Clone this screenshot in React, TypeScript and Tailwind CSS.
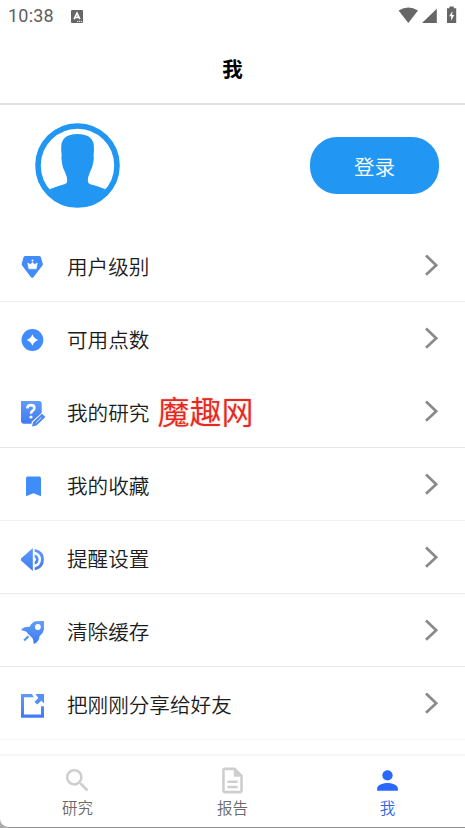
import type { ReactNode } from "react";
import clsx from "clsx";

interface MenuItem {
  label: string;
  icon: ReactNode;
  border: string;
}

const menuItems: MenuItem[] = [
  {
    label: "用户级别",
    border: "border-[#efefef]",
    icon: (
      <>
        <path d="M6.5 5h14q1 0 1.6 1l2 6.7q.3 1-.4 1.8l-9 11.7q-1.2 1.3-2.4 0l-8.9-11.7q-.7-.9-.4-1.8L4.9 6q.5-1 1.6-1Z" transform="translate(-.3 0)" fill="#418cfb" />
        <path d="M8.8 12l2.7 1.6 2-2.4 2 2.4 2.7-1.6-.9 5.8H9.8Z" fill="#fff" stroke="#fff" strokeWidth=".6" />
        <circle cx="13.5" cy="9.6" r="1" fill="#fff" />
      </>
    ),
  },
  {
    label: "可用点数",
    border: "border-transparent",
    icon: (
      <>
        <circle cx="13.4" cy="16" r="10.9" fill="#418cfb" />
        <path d="M13.4 10.2q1.5 4.2 5.7 5.8-4.2 1.6-5.7 5.8-1.5-4.2-5.7-5.8 4.2-1.6 5.7-5.8Z" fill="#fff" />
      </>
    ),
  },
  {
    label: "我的研究",
    border: "border-[#e6e6e6]",
    icon: (
      <>
        <path d="M2 4h18q2.7 0 2.7 2.7V17L13.3 26.8H5q-3 0-3-3Z" fill="url(#blue)" />
        <path d="M8.3 11.4q.1-3.3 3.7-3.3 3.4 0 3.4 2.9 0 1.6-1.6 2.6-1.8 1.1-1.8 3.1" fill="none" stroke="#fff" strokeWidth="2.6" />
        <circle cx="12" cy="20" r="1.6" fill="#fff" />
        <path d="M23.2 15.6l4 3.6-9.4 9.8-6.4 1.2 1.6-5.6Z" fill="#fff" />
        <path d="M23 16.8l3.4 3.1-8.9 8.5-4.6 1.2 1.2-4.5Z" fill="#4f87f4" />
        <path d="M17.1 25.7l5.2-5.2" stroke="#fff" strokeWidth=".8" />
      </>
    ),
  },
  {
    label: "我的收藏",
    border: "border-[#f0f0f0]",
    icon: <path d="M7 8.2q0-1.7 1.7-1.7h11.6q1.7 0 1.7 1.7v18.1l-7.5-3-7.5 3Z" fill="#418cfb" />,
  },
  {
    label: "提醒设置",
    border: "border-[#ebebeb]",
    icon: (
      <>
        <path d="M13.8 5v23L2 17.5v-2Z" fill="url(#blue)" />
        <path d="M15.7 11.5q3.9 1 3.9 5t-3.9 5v-3q1.3-.6 1.3-2t-1.3-2Z" fill="url(#blue)" />
        <path d="M15.7 5.9q9.2 1.7 9.2 10.6t-9.2 10.7v-2.8q6.3-1.8 6.3-7.9t-6.3-7.8Z" fill="url(#blue)" />
      </>
    ),
  },
  {
    label: "清除缓存",
    border: "border-[#e6e6e6]",
    icon: (
      <>
        <path d="M25 5l-8.3.3q-3.3.5-6.2 5.6-5.3-.6-8.5 3.2l4.2 1.2q1.7.6 2.5 2.2l3.6 3.5q1.5 1 1.8 2.8l.7 4.3q5.6-2.7 5.7-7.9 3.9-3 4.4-6.5Z" fill="url(#blue)" />
        <circle cx="18.9" cy="11" r="2.9" fill="#fff" />
        <path d="M9.4 20.2l-4.2 4.3" stroke="#4f8ff8" strokeWidth="2.1" />
      </>
    ),
  },
  {
    label: "把刚刚分享给好友",
    border: "border-[#f5f5f5]",
    icon: (
      <>
        <path d="M13 5H2v23.7h23V17.2h-3v8.3H5V8.2h9.7Z" fill="url(#blue)" />
        <path d="M16.4 5H25v9.3l-2.8-2.5-3.9 3.8-2.8-2.8 3.9-3.8Z" fill="#5590f5" />
      </>
    ),
  },
];

const tabs = [
  {
    label: "研究",
    path: "M15.5 14h-.79l-.28-.27A6.47 6.47 0 0 0 16 9.5 6.5 6.5 0 1 0 9.5 16c1.61 0 3.09-.59 4.23-1.57l.27.28v.79l5 4.99L20.49 19l-4.99-5zm-6 0C7.01 14 5 11.99 5 9.5S7.01 5 9.5 5 14 7.01 14 9.5 11.99 14 9.5 14z",
  },
  {
    label: "报告",
    path: "M8 16h8v2H8zm0-4h8v2H8zm6-10H6c-1.1 0-2 .9-2 2v16c0 1.1.89 2 1.99 2H18c1.1 0 2-.9 2-2V8l-6-6zm4 18H6V4h7v5h5v11z",
  },
  {
    label: "我",
    path: "M12 12c2.21 0 4-1.79 4-4s-1.79-4-4-4-4 1.79-4 4 1.79 4 4 4zm0 2c-2.67 0-8 1.34-8 4v2h16v-2c0-2.66-5.33-4-8-4z",
    active: true,
  },
];

function StatusBar() {
  return (
    <div className="flex h-8 items-center pl-2 pr-2 font-['Roboto',sans-serif] text-[#5e5e5e]">
      <span className="w-[63px] text-[18px] leading-8 tracking-[0.2px]">10:38</span>
      <svg className="h-[13px] w-3" viewBox="0 0 12 13">
        <rect width="12" height="13" rx="1" fill="#666" />
        <path d="M3.1 9.1L6 3l2.9 6.1M4.1 7.4h3.8" fill="none" stroke="#fff" strokeWidth="1.6" />
        <path d="M6 11.4h5" stroke="#fff" strokeWidth="1" strokeDasharray="1.2 .8" />
      </svg>
      <svg className="mb-[2px] ml-auto h-[18px] w-[59px]" viewBox="0 0 59 18" fill="#666">
        <path d="M.6 4.6Q10.3-1.6 20 4.6L10.3 17Z" />
        <path d="M38.8 2.7V17H24Z" />
        <path d="M51.4 .4h4.4v1.8h2.4V17h-9.2V2.2h2.4Z" />
        <path d="M54.5 4.9l-3.3 5.3h2v4.6l3-5.9h-2Z" fill="#fff" />
      </svg>
    </div>
  );
}

function Profile() {
  return (
    <section className="flex h-[124px] items-center justify-between pt-[2px] pr-[26px] pb-[5px] pl-[35px]">
      <svg className="size-[85px]" viewBox="0 0 85 85">
        <circle cx="42.5" cy="42.5" r="39.5" fill="#fff" stroke="#2196f3" strokeWidth="5.6" />
        <path d="M14.5 66.3q7.5-3.2 14.8-5.1 3-.7 2.9-3.2 0-4.5-2.2-8.8-2.8-4.4-3.2-10.7-1-3.4-.1-5.8-.9-5.7-.3-11.5Q28.5 11 42.5 11t16.2 10.2q.7 5.8-.2 11.5.9 2.4-.1 5.8-.8 6.3-3.5 10.7-2 4.3-2.1 8.8 0 2.5 2.5 3.2 8.2 1.9 15.2 5.1-10.5 15.9-28 15.9t-28-15.9Z" fill="#2196f3" />
      </svg>
      <button className="h-[57px] w-[129px] rounded-[27px] bg-[#2196f3] pt-[2px] text-[20.5px] font-[350] text-white">登录</button>
    </section>
  );
}

function MenuRow({ label, icon, border }: MenuItem) {
  return (
    <li className={clsx("flex h-[73px] items-center border-b pr-[26px] pl-[19px]", border)}>
      <svg className="size-7 overflow-visible" viewBox="0 0 28 28">
        {icon}
      </svg>
      <span className="ml-5 pt-[2px] text-[20.6px] leading-8 font-[350] text-[#1c1c1c]">{label}</span>
      <svg className="ml-auto h-[22px] w-[15px]" viewBox="0 0 15 22">
        <path d="M2 1.5l10.2 9.7L2 20.7" fill="none" stroke="#8a8a8a" strokeWidth="2.7" />
      </svg>
    </li>
  );
}

function TabBar() {
  return (
    <nav className="grid h-[74px] grid-cols-3 rounded-bl-[9px] border-t-2 border-b border-t-[#f6f6f6] border-b-[#8d8d8d] bg-white">
      {tabs.map((tab) => (
        <div
          key={tab.label}
          className={clsx("flex flex-col items-center pt-[9px]", tab.active ? "text-[#2868ff]" : "text-[#cecece]")}
        >
          <svg className="h-[31px] w-[31px]" viewBox="0 0 24 24" fill="currentColor">
            <path d={tab.path} />
          </svg>
          <span className={clsx("-mt-px text-[15.5px] leading-6 font-[350]", tab.active ? "text-[#2c66e0]" : "text-[#6a6a6a]")}>
            {tab.label}
          </span>
        </div>
      ))}
    </nav>
  );
}

export default function App() {
  return (
    <div className="h-[828px] w-[465px] overflow-hidden bg-[#aaa] font-['Noto_Sans_CJK_SC',sans-serif]">
      <div className="relative flex h-full flex-col rounded-bl-[9px] bg-white">
        {/* shared gradient for the menu icons */}
        <svg className="absolute size-0">
          <defs>
            <linearGradient id="blue" x1="0" y1="0" x2="0" y2="1">
              <stop offset="0" stopColor="#609cf8" />
              <stop offset="1" stopColor="#407bf0" />
            </linearGradient>
          </defs>
        </svg>
        <StatusBar />
        <header className="flex h-[73px] items-center justify-center border-b-2 border-[#e0e0e0]">
          <h1 className="text-[20.5px] leading-8 font-bold text-black">我</h1>
        </header>
        <Profile />
        <ul className="flex-1">
          {menuItems.map((item) => (
            <MenuRow key={item.label} {...item} />
          ))}
        </ul>
        <TabBar />
        <div className="absolute top-[386px] left-[157.5px] text-[32px] leading-[48px] font-[350] text-[#e32a20] [text-shadow:0_0_2px_#ffb5b0]">
          魔趣网
        </div>
      </div>
    </div>
  );
}
